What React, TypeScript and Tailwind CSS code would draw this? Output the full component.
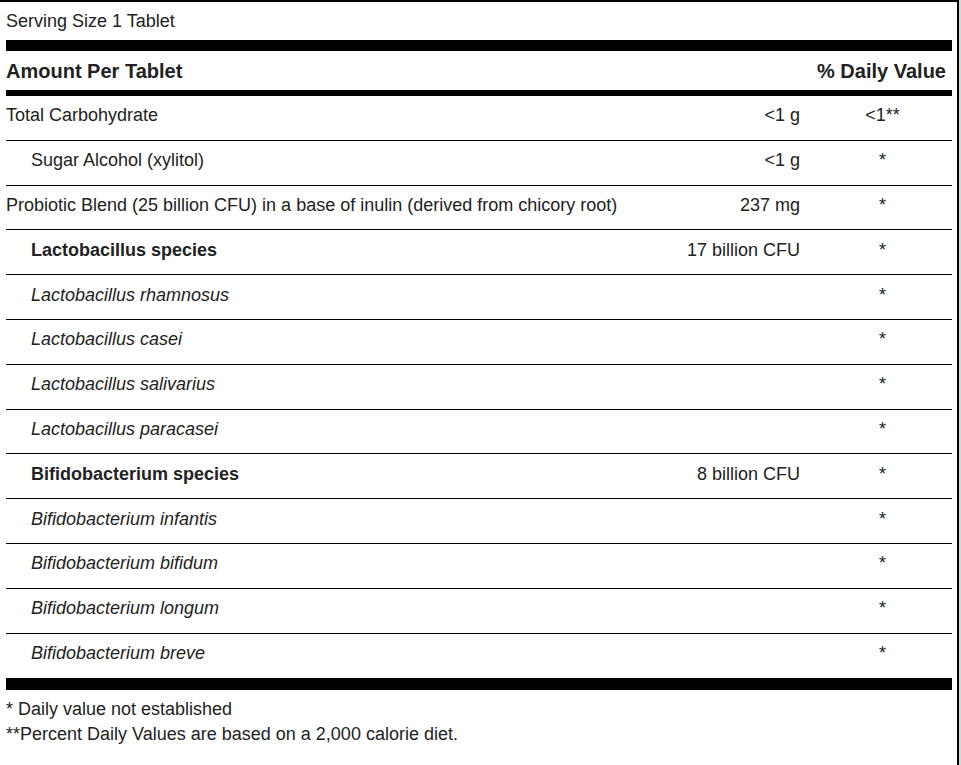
type Row = {
  name: string
  amount?: string
  dv: string
  indent?: boolean
  bold?: boolean
  italic?: boolean
}

const rows: Row[] = [
  { name: "Total Carbohydrate", amount: "<1 g", dv: "<1**" },
  { name: "Sugar Alcohol (xylitol)", amount: "<1 g", dv: "*", indent: true },
  { name: "Probiotic Blend (25 billion CFU) in a base of inulin (derived from chicory root)", amount: "237 mg", dv: "*" },
  { name: "Lactobacillus species", amount: "17 billion CFU", dv: "*", indent: true, bold: true },
  { name: "Lactobacillus rhamnosus", dv: "*", indent: true, italic: true },
  { name: "Lactobacillus casei", dv: "*", indent: true, italic: true },
  { name: "Lactobacillus salivarius", dv: "*", indent: true, italic: true },
  { name: "Lactobacillus paracasei", dv: "*", indent: true, italic: true },
  { name: "Bifidobacterium species", amount: "8 billion CFU", dv: "*", indent: true, bold: true },
  { name: "Bifidobacterium infantis", dv: "*", indent: true, italic: true },
  { name: "Bifidobacterium bifidum", dv: "*", indent: true, italic: true },
  { name: "Bifidobacterium longum", dv: "*", indent: true, italic: true },
  { name: "Bifidobacterium breve", dv: "*", indent: true, italic: true },
]

export default function App() {
  return (
    <div className="flex w-[961px] h-[765px] bg-white text-[#222] text-[18px] font-['Liberation_Sans',Arial,sans-serif]">
      <div className="w-[959px] h-full border-t-2 border-r-2 border-black pl-[6px] pr-[5px]">
        <div className="h-[38px] flex items-center pt-[1px]">Serving Size 1 Tablet</div>
        <div className="h-[11px] bg-black" />
        <div className="h-[39px] flex items-center justify-between pr-[6px] font-bold text-[20px]">
          <span>Amount Per Tablet</span>
          <span>% Daily Value</span>
        </div>
        <div className="h-[6px] bg-black" />
        {rows.map((r, i) => (
          <div
            key={r.name}
            className={`h-[44.8px] pb-[4px] grid grid-cols-[1fr_auto_139px] items-center ${i < rows.length - 1 ? "border-b border-black" : ""}`}
          >
            <span className={`${r.indent ? "pl-[25px]" : ""} ${r.bold ? "font-bold" : ""} ${r.italic ? "italic" : ""}`}>
              {r.name}
            </span>
            <span className="text-right pr-[13px]">{r.amount ?? ""}</span>
            <span className="text-center">{r.dv}</span>
          </div>
        ))}
        <div className="h-[12px] bg-black" />
        <div className="pt-[7px] leading-[25px]">
          <p>* Daily value not established</p>
          <p>**Percent Daily Values are based on a 2,000 calorie diet.</p>
        </div>
      </div>
      <div className="w-[2px] h-full bg-[#d8d8d8]" />
    </div>
  )
}
